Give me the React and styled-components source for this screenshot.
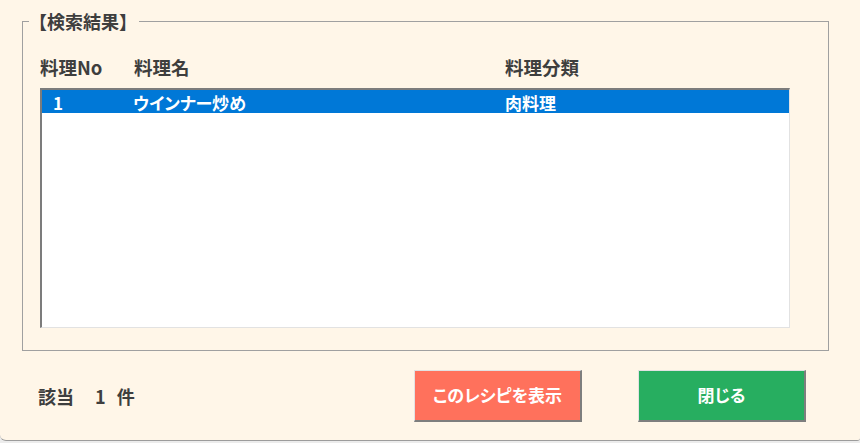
import styled, { createGlobalStyle } from "styled-components";

const GlobalStyle = createGlobalStyle`
  html, body {
    margin: 0;
    padding: 0;
    height: 443px;
    overflow: hidden;
    background: #ececec;
  }
  body {
    font-family: "Noto Sans CJK JP", "Noto Sans", sans-serif;
  }
`;

const Window = styled.div`
  display: flex;
  flex-direction: column;
  height: 440px;
  background: #fff6e8;
  border-bottom: 1px solid #9c9c9c;
  border-bottom-left-radius: 6px;
  border-bottom-right-radius: 3px;
  color: #3e3e3e;
  font-weight: 700;
`;

const Group = styled.fieldset`
  margin: 10px 31px 0 22px;
  padding: 0;
  min-width: 0;
  border: 1px solid #a0a0a0;
`;

const Legend = styled.legend`
  margin-left: 6px;
  padding: 0 2px 0 0;
  font-size: 18px;
  line-height: 22px;
  color: #3e3e3e;
`;

const Body = styled.div`
  display: flex;
  flex-direction: column;
  padding: 23px 38px 22px 17px;
`;

const Header = styled.div`
  display: grid;
  grid-template-columns: 94px 371px 1fr;
  font-size: 18.5px;
  line-height: 24px;
  margin-bottom: 9px;
`;

const List = styled.div`
  display: flex;
  flex-direction: column;
  height: 240px;
  box-sizing: border-box;
  background: #fff;
  border-style: solid;
  border-width: 2px 1px 1px 2px;
  border-color: #7c7c7c #e2e2e2 #e2e2e2 #7c7c7c;
`;

const Row = styled.div`
  display: grid;
  grid-template-columns: 80px 372px 1fr;
  padding-left: 11px;
  height: 23px;
  align-items: center;
  font-size: 17px;
  font-feature-settings: "palt";
  background: ${(p) => (p.$selected ? "#0078d7" : "transparent")};
  color: ${(p) => (p.$selected ? "#fff" : "#3e3e3e")};
`;

const Footer = styled.div`
  display: flex;
  align-items: center;
  padding: 19px 54px 0 38px;
`;

const Count = styled.div`
  flex: 1;
  font-size: 18px;
`;

const Num = styled.span`
  margin: 0 11px 0 21px;
`;

const Buttons = styled.div`
  display: flex;
  gap: 56px;
`;

const Button = styled.button`
  width: 168px;
  height: 52px;
  box-sizing: border-box;
  font-family: inherit;
  font-weight: 700;
  font-size: 17px;
  font-feature-settings: "palt";
  color: #fff;
  background: ${(p) => p.$bg};
  border-style: solid;
  border-width: 1px 2px 2px 1px;
  border-color: #e2e2e2 #7e7e7e #7e7e7e #e2e2e2;
  padding: 0 0 2px;
  cursor: pointer;
`;

const rows = [{ no: "1", name: "ウインナー炒め", kind: "肉料理" }];

export default function App() {
  return (
    <>
      <GlobalStyle />
      <Window>
        <Group>
          <Legend>【検索結果】</Legend>
          <Body>
            <Header>
              <span>料理No</span>
              <span>料理名</span>
              <span>料理分類</span>
            </Header>
            <List>
              {rows.map((r) => (
                <Row key={r.no} $selected>
                  <span>{r.no}</span>
                  <span>{r.name}</span>
                  <span>{r.kind}</span>
                </Row>
              ))}
            </List>
          </Body>
        </Group>
        <Footer>
          <Count>
            該当<Num>{rows.length}</Num>件
          </Count>
          <Buttons>
            <Button $bg="#ff715c">このレシピを表示</Button>
            <Button $bg="#27ae60">閉じる</Button>
          </Buttons>
        </Footer>
      </Window>
    </>
  );
}
